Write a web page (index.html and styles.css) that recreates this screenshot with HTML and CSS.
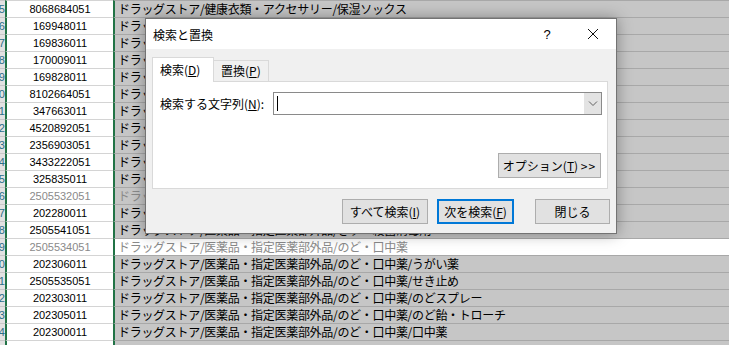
FILE: index.html
```html
<!DOCTYPE html>
<html lang="ja">
<head>
    <meta charset="UTF-8">
    <title>検索と置換</title>
    <link rel="stylesheet" href="styles.css">
</head>
<body>

    <!-- Sheet rows -->
    <div class="sheet">
        <div class="row"><div class="row-num"><span>1065</span></div><div class="cell-id">8068684051</div><div class="cell-name">ドラッグストア/健康衣類・アクセサリー/保湿ソックス</div></div>
        <div class="row"><div class="row-num"><span>1066</span></div><div class="cell-id">169948011</div><div class="cell-name">ドラッグストア/医薬品・指定医薬部外品/胃腸薬</div></div>
        <div class="row"><div class="row-num"><span>1067</span></div><div class="cell-id">169836011</div><div class="cell-name">ドラッグストア/医薬品・指定医薬部外品/かぜ薬</div></div>
        <div class="row"><div class="row-num"><span>1068</span></div><div class="cell-id">170009011</div><div class="cell-name">ドラッグストア/医薬品・指定医薬部外品/目薬</div></div>
        <div class="row"><div class="row-num"><span>1069</span></div><div class="cell-id">169828011</div><div class="cell-name">ドラッグストア/医薬品・指定医薬部外品/鎮痛剤</div></div>
        <div class="row"><div class="row-num"><span>1070</span></div><div class="cell-id">8102664051</div><div class="cell-name">ドラッグストア/医薬品・指定医薬部外品/皮膚薬</div></div>
        <div class="row"><div class="row-num"><span>1071</span></div><div class="cell-id">347663011</div><div class="cell-name">ドラッグストア/医薬品・指定医薬部外品/鼻炎薬</div></div>
        <div class="row"><div class="row-num"><span>1072</span></div><div class="cell-id">4520892051</div><div class="cell-name">ドラッグストア/医薬品・指定医薬部外品/整腸薬</div></div>
        <div class="row"><div class="row-num"><span>1073</span></div><div class="cell-id">2356903051</div><div class="cell-name">ドラッグストア/医薬品・指定医薬部外品/漢方薬</div></div>
        <div class="row"><div class="row-num"><span>1074</span></div><div class="cell-id">3433222051</div><div class="cell-name">ドラッグストア/医薬品・指定医薬部外品/便秘薬</div></div>
        <div class="row"><div class="row-num"><span>1075</span></div><div class="cell-id">325835011</div><div class="cell-name">ドラッグストア/医薬品・指定医薬部外品/ビタミン剤</div></div>
        <div class="row muted"><div class="row-num"><span>1076</span></div><div class="cell-id">2505532051</div><div class="cell-name">ドラッグストア/医薬品・指定医薬部外品/殺菌消毒剤</div></div>
        <div class="row"><div class="row-num"><span>1077</span></div><div class="cell-id">202280011</div><div class="cell-name">ドラッグストア/医薬品・指定医薬部外品/殺菌消毒剤</div></div>
        <div class="row"><div class="row-num"><span>1078</span></div><div class="cell-id">2505541051</div><div class="cell-name">ドラッグストア/医薬品・指定医薬部外品/きず・殺菌消毒剤</div></div>
        <div class="row muted active"><div class="row-num"><span>1079</span></div><div class="cell-id">2505534051</div><div class="cell-name">ドラッグストア/医薬品・指定医薬部外品/のど・口中薬</div></div>
        <div class="row"><div class="row-num"><span>1080</span></div><div class="cell-id">202306011</div><div class="cell-name">ドラッグストア/医薬品・指定医薬部外品/のど・口中薬/うがい薬</div></div>
        <div class="row"><div class="row-num"><span>1081</span></div><div class="cell-id">2505535051</div><div class="cell-name">ドラッグストア/医薬品・指定医薬部外品/のど・口中薬/せき止め</div></div>
        <div class="row"><div class="row-num"><span>1082</span></div><div class="cell-id">202303011</div><div class="cell-name">ドラッグストア/医薬品・指定医薬部外品/のど・口中薬/のどスプレー</div></div>
        <div class="row"><div class="row-num"><span>1083</span></div><div class="cell-id">202305011</div><div class="cell-name">ドラッグストア/医薬品・指定医薬部外品/のど・口中薬/のど飴・トローチ</div></div>
        <div class="row"><div class="row-num"><span>1084</span></div><div class="cell-id">202300011</div><div class="cell-name">ドラッグストア/医薬品・指定医薬部外品/のど・口中薬/口中薬</div></div>
        <div class="row"><div class="row-num"><span>1085</span></div><div class="cell-id"></div><div class="cell-name"></div></div>
    </div>

    <!-- Find and Replace dialog -->
    <div class="dialog">
        <div class="title-bar">
            <span class="title">検索と置換</span>
            <span class="title-btn help">?</span>
            <span class="title-btn close">
                <svg width="12" height="12" viewBox="0 0 12 12"><path d="M1 1L11 11M11 1L1 11" stroke="#111" stroke-width="1" fill="none"/></svg>
            </span>
        </div>

        <div class="dialog-body">
            <div class="tabs">
                <div class="tab active">検索(<u>D</u>)</div>
                <div class="tab">置換(<u>P</u>)</div>
            </div>

            <div class="panel">
                <div class="search-row">
                    <label class="search-label">検索する文字列(<u>N</u>):</label>
                    <div class="combo">
                        <span class="caret"></span>
                        <span class="combo-arrow">
                            <svg width="10" height="6" viewBox="0 0 10 6"><path d="M1 0.5L5 4.5L9 0.5" stroke="#606060" stroke-width="1" fill="none"/></svg>
                        </span>
                    </div>
                </div>
                <div class="options-row">
                    <button class="btn options-btn">オプション(<u>T</u>) <span class="more">&gt;&gt;</span></button>
                </div>
            </div>

            <div class="footer">
                <button class="btn find-all">すべて検索(<u>I</u>)</button>
                <button class="btn find-next">次を検索(<u>F</u>)</button>
                <button class="btn close-btn">閉じる</button>
            </div>
        </div>
    </div>

</body>
</html>
```

FILE: styles.css
```css
/* General Reset */
* {
    margin: 0;
    padding: 0;
    box-sizing: border-box;
}

body {
    width: 729px;
    height: 345px;
    overflow: hidden;
    position: relative;
    background-color: #fff;
    font-family: "Noto Sans CJK JP", sans-serif;
    color: #000;
}

/* Sheet */
.sheet {
    display: flex;
    flex-direction: column;
}

.row {
    display: flex;
    height: 17px;
}

.row-num {
    width: 5px;
    display: flex;
    justify-content: flex-end;
    overflow: hidden;
    background-color: #e2e2e2;
    border-top: 1px solid #c8c8c8;
    color: #2a6f88;
    font: 11px/16px "Liberation Sans", Arial, sans-serif;
    white-space: nowrap;
}

.row-num span {
    flex-shrink: 0;
}

.cell-id {
    width: 108px;
    border-left: 2px solid #217346;
    border-top: 1px solid #d4d4d4;
    text-align: center;
    font: 11px/16px "Liberation Sans", Arial, sans-serif;
}

.cell-name {
    flex: 1;
    border-left: 2px solid #217346;
    border-top: 1px solid #a8a8a8;
    background-color: #c6c6c6;
    padding-left: 3px;
    font-size: 12px;
    line-height: 16px;
    letter-spacing: -0.3px;
    white-space: nowrap;
    overflow: hidden;
}

.row.muted .cell-id,
.row.muted .cell-name {
    color: #8a8a8a;
}

.row.active .cell-name {
    background-color: #fff;
}

/* Dialog */
.dialog {
    position: absolute;
    left: 145px;
    top: 18px;
    width: 472px;
    height: 216px;
    display: flex;
    flex-direction: column;
    background-color: #f0f0f0;
    border: 1px solid #737373;
    box-shadow: 0 0 14px rgba(0, 0, 0, 0.35);
    font-size: 12px;
}

.title-bar {
    height: 30px;
    display: flex;
    align-items: center;
    padding-left: 7px;
    background-color: #fff;
}

.title {
    flex: 1;
}

.title-btn {
    width: 46px;
    height: 30px;
    display: flex;
    justify-content: center;
    align-items: center;
}

.help {
    font: 13px "Liberation Sans", Arial, sans-serif;
}

.dialog-body {
    flex: 1;
    display: flex;
    flex-direction: column;
    padding: 8px 6px 0 6px;
}

/* Tabs */
.tabs {
    display: flex;
    align-items: flex-end;
    height: 24px;
}

.tab {
    width: 55px;
    height: 21px;
    padding: 1px 0 0 7px;
    border: 1px solid #d9d9d9;
    border-bottom: none;
    border-left: none;
    line-height: 18px;
    white-space: nowrap;
}

.tab.active {
    position: relative;
    z-index: 1;
    width: 62px;
    height: 25px;
    margin-bottom: -1px;
    padding-top: 3px;
    border-left: 1px solid #d9d9d9;
    background-color: #fff;
}

/* Panel */
.panel {
    height: 108px;
    margin-right: 2px;
    padding: 10px 5px 0 7px;
    background-color: #fff;
    border: 1px solid #d9d9d9;
}

.search-row {
    display: flex;
    align-items: center;
}

.search-label {
    width: 113px;
}

.combo {
    width: 329px;
    height: 23px;
    display: flex;
    align-items: center;
    border: 1px solid #8a8a8a;
}

.caret {
    width: 1px;
    height: 15px;
    margin-left: 3px;
    background-color: #000;
}

.combo-arrow {
    width: 17px;
    height: 21px;
    margin-left: auto;
    display: flex;
    justify-content: center;
    align-items: center;
    background-color: #e3e3e3;
}

.options-row {
    display: flex;
    justify-content: flex-end;
    margin-top: 38px;
    padding-right: 1px;
}

/* Buttons */
.btn {
    height: 25px;
    background-color: #e1e1e1;
    border: 1px solid #adadad;
    font-family: "Noto Sans CJK JP", sans-serif;
    font-size: 12px;
    color: #000;
    white-space: nowrap;
}

.options-btn {
    width: 103px;
}

.more {
    letter-spacing: 1px;
}

.footer {
    display: flex;
    justify-content: flex-end;
    margin-top: 10px;
}

.find-all {
    width: 86px;
}

.find-next {
    width: 77px;
    margin-left: 9px;
    border: 2px solid #0078d7;
}

.close-btn {
    width: 75px;
    margin-left: 21px;
}
```
